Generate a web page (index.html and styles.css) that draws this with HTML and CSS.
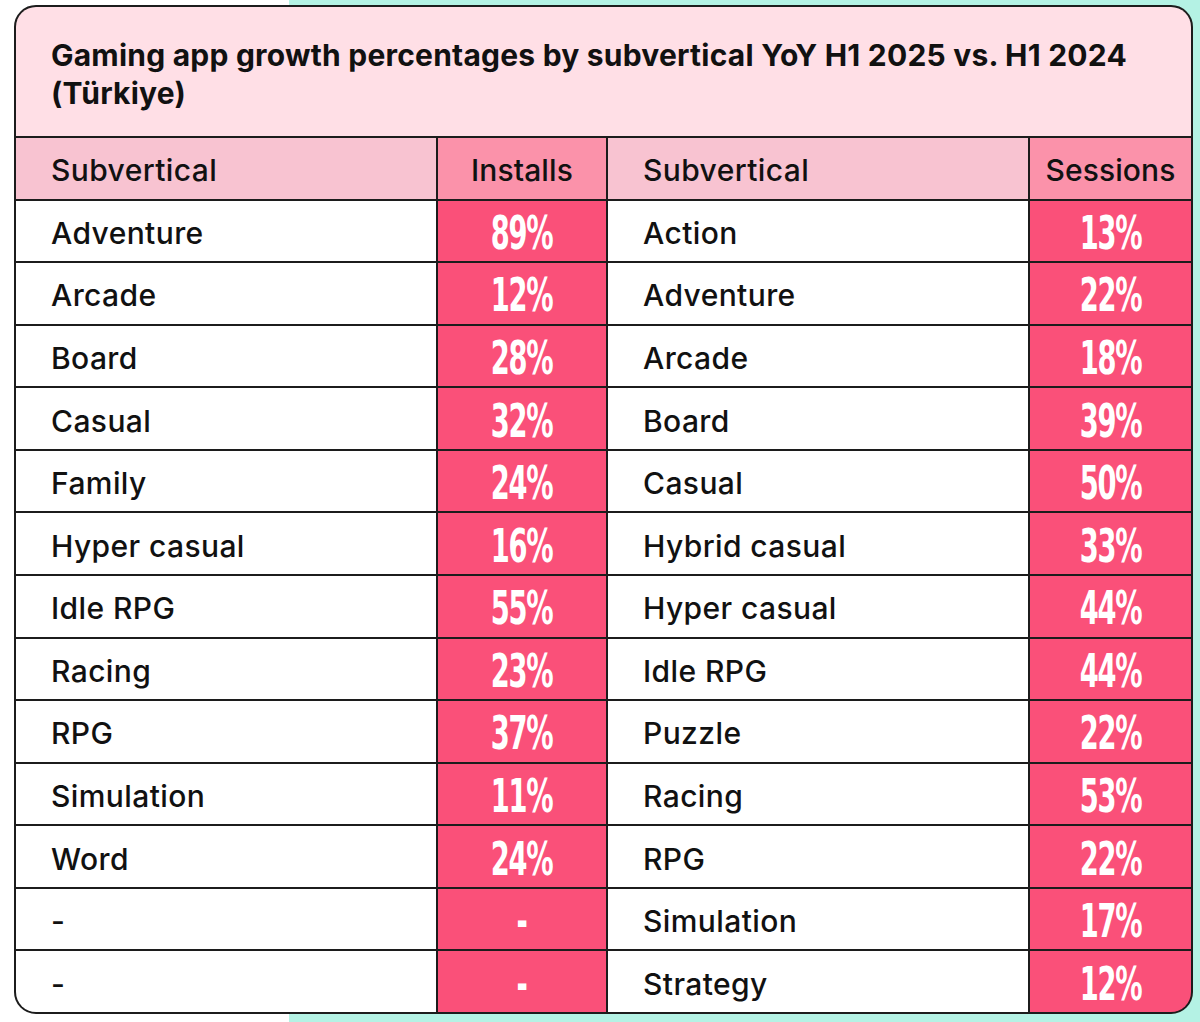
FILE: index.html
```html
<!DOCTYPE html>
<html lang="en">
<head>
<meta charset="utf-8">
<title>Gaming app growth percentages</title>
<link rel="stylesheet" href="styles.css">
</head>
<body>
<div class="card">
  <div class="title">Gaming app growth percentages by subvertical YoY H1 2025 vs. H1 2024 (Türkiye)</div>
  <div class="grid">
    <div class="hd name">Subvertical</div>
    <div class="hd metric">Installs</div>
    <div class="hd name">Subvertical</div>
    <div class="hd metric">Sessions</div>

    <div class="name">Adventure</div><div class="val"><span>89%</span></div><div class="name">Action</div><div class="val"><span>13%</span></div>
    <div class="name">Arcade</div><div class="val"><span>12%</span></div><div class="name">Adventure</div><div class="val"><span>22%</span></div>
    <div class="name">Board</div><div class="val"><span>28%</span></div><div class="name">Arcade</div><div class="val"><span>18%</span></div>
    <div class="name">Casual</div><div class="val"><span>32%</span></div><div class="name">Board</div><div class="val"><span>39%</span></div>
    <div class="name">Family</div><div class="val"><span>24%</span></div><div class="name">Casual</div><div class="val"><span>50%</span></div>
    <div class="name">Hyper casual</div><div class="val"><span>16%</span></div><div class="name">Hybrid casual</div><div class="val"><span>33%</span></div>
    <div class="name">Idle RPG</div><div class="val"><span>55%</span></div><div class="name">Hyper casual</div><div class="val"><span>44%</span></div>
    <div class="name">Racing</div><div class="val"><span>23%</span></div><div class="name">Idle RPG</div><div class="val"><span>44%</span></div>
    <div class="name">RPG</div><div class="val"><span>37%</span></div><div class="name">Puzzle</div><div class="val"><span>22%</span></div>
    <div class="name">Simulation</div><div class="val"><span>11%</span></div><div class="name">Racing</div><div class="val"><span>53%</span></div>
    <div class="name">Word</div><div class="val"><span>24%</span></div><div class="name">RPG</div><div class="val"><span>22%</span></div>
    <div class="name">-</div><div class="val"><span>-</span></div><div class="name">Simulation</div><div class="val"><span>17%</span></div>
    <div class="name">-</div><div class="val"><span>-</span></div><div class="name">Strategy</div><div class="val"><span>12%</span></div>
  </div>
</div>
</body>
</html>
```

FILE: styles.css
```css
html, body {
  margin: 0;
  padding: 0;
}
body {
  width: 1200px;
  height: 1022px;
  overflow: hidden;
  background: linear-gradient(to right, #ffffff 289px, #b4f2e4 289px);
  font-family: Inter, "Noto Sans", sans-serif;
  color: #111;
}
.card {
  box-sizing: border-box;
  margin: 5px 0 0 14px;
  width: 1179px;
  height: 1009px;
  border: 2px solid #1c1c1c;
  border-radius: 22px;
  overflow: hidden;
  background: #1c1c1c;
  display: flex;
  flex-direction: column;
}
.title {
  box-sizing: border-box;
  height: 131px;
  background: #ffdfe6;
  padding: 29px 20px 0 35px;
  font-size: 30px;
  font-weight: 700;
  line-height: 38px;
  letter-spacing: 0.22px;
  border-bottom: 2px solid #1c1c1c;
  flex: none;
}
.grid {
  flex: 1;
  display: grid;
  grid-template-columns: 420px 168px 420px 161px;
  grid-template-rows: repeat(14, 1fr);
  gap: 2px;
  background: #1c1c1c;
}
.grid > div {
  display: flex;
  align-items: center;
  padding-top: 4px;
  box-sizing: border-box;
}
.name {
  background: #ffffff;
  padding-left: 35px;
  font-size: 30px;
  font-weight: 500;
  letter-spacing: 0.4px;
}
.hd.name {
  background: #f8c3d1;
}
.hd.metric {
  background: #fb92aa;
  justify-content: center;
  font-size: 30px;
  font-weight: 500;
  letter-spacing: 0.1px;
}
.val {
  background: #fa5079;
  justify-content: center;
  color: #ffffff;
}
.val span {
  display: inline-block;
  font-family: "DejaVu Sans Condensed", "DejaVu Sans", sans-serif;
  font-weight: 700;
  font-size: 46px;
  line-height: 1;
  letter-spacing: -2px;
  transform: scaleX(0.66);
}
```
